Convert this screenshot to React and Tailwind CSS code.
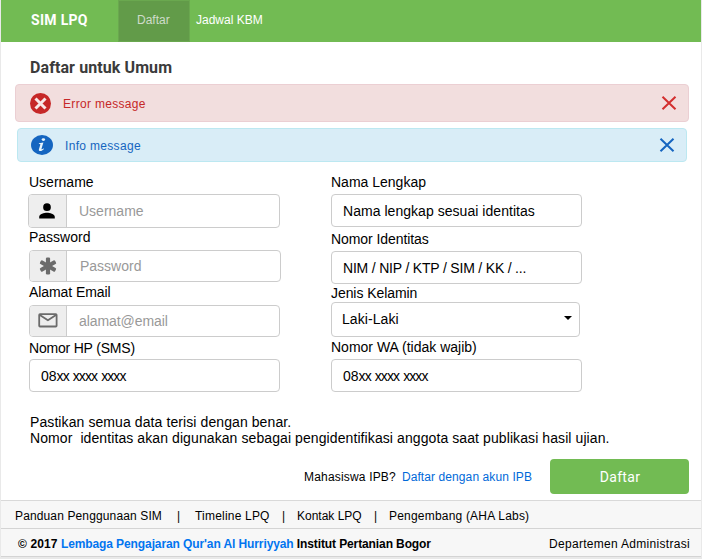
import React from 'react';

const box = 'flex rounded border border-[#cccccc] bg-white overflow-hidden';

function Field({ label, className, labelClass = '', boxClass, icon, iconClass = 'w-[37px]', value, muted, valueClass = '', children }) {
  return (
    <label className={`flex flex-col text-[14px] leading-4 ${className}`}>
      <span className={`h-4 whitespace-pre ${labelClass}`}>{label}</span>
      <span className={`${box} ${boxClass}`}>
        {icon && (
          <span className={`flex h-full shrink-0 items-center justify-center border-r border-[#cccccc] bg-[#eeeeee] ${iconClass}`}>
            {icon}
          </span>
        )}
        <span className={`flex flex-1 items-center whitespace-pre ${muted ? 'text-[#999999]' : 'text-black'} ${valueClass}`}>
          {value}
        </span>
        {children}
      </span>
    </label>
  );
}

function PhoneMask() {
  return (
    <>
      <span>08</span>
      <span className="tracking-[-0.9px] [word-spacing:1px]">xx xxxx xxxx</span>
    </>
  );
}

function UserIcon() {
  return (
    <svg width="22" height="22" viewBox="0 0 24 24" className="mr-0.5">
      <path d="M12 12a4.2 4.2 0 1 0 0-8.4 4.2 4.2 0 0 0 0 8.4zm0 1.8c-2.900 0-8.500 1.500-8.500 4.400V20.200h17v-2c0-2.900-5.600-4.400-8.500-4.400z" fill="#000" />
    </svg>
  );
}

function AsteriskIcon() {
  return (
    <svg width="18" height="18" viewBox="0 0 18 18" className="mr-px">
      <g fill="#6b6b6b">
        <rect x="6.900" y="0.500" width="4.200" height="17" rx="1.200" />
        <rect x="6.900" y="0.300" width="4.200" height="17.400" rx="1.200" transform="rotate(60 9 9)" />
        <rect x="6.900" y="0.300" width="4.200" height="17.400" rx="1.200" transform="rotate(-60 9 9)" />
      </g>
    </svg>
  );
}

function MailIcon() {
  return (
    <svg width="20" height="15" viewBox="0 0 20 15" fill="none" stroke="#6b6b6b" strokeWidth="1.800" strokeLinejoin="round" className="mb-0.5">
      <rect x="1.200" y="1.200" width="17.400" height="12.300" rx="0.800" />
      <path d="M1.800 2l8.100 5.300L18 2" />
    </svg>
  );
}

function CloseIcon({ color }) {
  return (
    <svg width="16" height="16" viewBox="0 0 16 16" stroke={color} strokeWidth="2">
      <path d="M1.500 1.700l13 12.600M14.500 1.700l-13 12.600" />
    </svg>
  );
}

export default function App() {
  return (
    <div className="flex h-[559px] w-[702px] flex-col bg-[#e9e9e9] pl-px pr-px font-['Liberation_Sans',Arial,sans-serif] text-black">
      <header className="flex h-[42px] shrink-0 items-stretch bg-[#72bb53] text-[12px] text-white">
        <div className="w-[117px] pl-[30px] pt-[11px] text-[14px] font-bold leading-[18px] tracking-[0.3px] font-[Roboto,sans-serif]">SIM LPQ</div>
        <div className="w-[72px] border border-[#6aa84f] bg-[#629b49] pl-[18px] pt-[11px] leading-4 text-[#cfdcca]">Daftar</div>
        <div className="pl-1.5 pt-3 leading-4">Jadwal KBM</div>
      </header>

      <main className="flex h-[458px] shrink-0 flex-col bg-white">
        <h1 className="ml-[29px] mt-4 h-5 text-[16px] font-bold leading-5 tracking-[0.09px] text-[#3b3b3b] font-[Roboto,sans-serif]">Daftar untuk Umum</h1>

        <div className="ml-[14px] mt-1.5 flex h-[38px] w-[674px] shrink-0 items-center rounded border border-[#ebcfd3] bg-[#f2dede] pl-3.5 pr-[11px] text-[12px] text-[#c62828]">
          <svg width="22" height="22" viewBox="0 0 22 22">
            <circle cx="10.500" cy="11.500" r="10.500" fill="#c62828" />
            <path d="M5.500 6.500l10 10M15.500 6.500l-10 10" stroke="#f8e8e8" strokeWidth="3" />
          </svg>
          <span className="ml-[11px] flex-1 pt-px tracking-[0.32px]">Error message</span>
          <CloseIcon color="#d32f2f" />
        </div>

        <div className="ml-[16px] mt-1.5 flex h-[34px] w-[670px] shrink-0 items-center rounded border border-[#bce8f1] bg-[#d9edf7] pl-3 pr-[11px] text-[12px] text-[#1565c0]">
          <svg width="24" height="22" viewBox="0 0 24 22">
            <ellipse cx="12" cy="11" rx="11" ry="10" fill="#1565c0" />
            <ellipse cx="13.400" cy="5.600" rx="1.700" ry="1.400" fill="#e8f4fb" />
            <path d="M9 9.300l4.400-0.900-1.900 6.300c-.2.800.4.700 2.300-.5v1c-1.800 1.600-3 2-4 1.800-1.100-.3-1.100-1-.8-2l1.400-4.400c.2-.7-.5-.7-1.600-.5z" fill="#e8f4fb" />
          </svg>
          <span className="ml-[11px] flex-1 pt-px tracking-[0.32px]">Info message</span>
          <CloseIcon color="#1565c0" />
        </div>

        <div className="ml-[27px] mt-3 flex h-[219px] shrink-0">
          <div className="w-[303px] shrink-0">
            <Field label="Username" className="h-[55px]" labelClass="ml-px" boxClass="mt-1 h-[34px] w-[252px]" icon={<UserIcon />} iconClass="w-[38px]" value="Username" muted valueClass="pl-3" />
            <Field label="Password" className="ml-px h-[55px]" boxClass="mt-[5px] h-8 w-[252px]" icon={<AsteriskIcon />} value="Password" muted valueClass="pl-[13px]" />
            <Field label="Alamat Email" className="ml-px h-[56px]" labelClass="tracking-[-0.08px]" boxClass="mt-[5px] h-8 w-[251px]" icon={<MailIcon />} value="alamat@email" muted valueClass="pl-3 tracking-[-0.08px]" />
            <Field label="Nomor HP (SMS)" className="ml-px" labelClass="tracking-[-0.2px]" boxClass="mt-[3px] h-[33px] w-[251px]" value={<PhoneMask />} valueClass="pl-[11px]" />
          </div>
          <div className="shrink-0">
            <Field label="Nama Lengkap" className="h-[57px]" boxClass="mt-1 h-[33px] w-[251px]" value="Nama lengkap sesuai identitas" valueClass="pl-[11px] tracking-[0.04px]" />
            <Field label="Nomor Identitas" className="h-[54px]" labelClass="tracking-[-0.07px]" boxClass="mt-1 h-[33px] w-[251px]" value="NIM / NIP / KTP / SIM / KK / ..." valueClass="pl-[11px] tracking-[-0.19px]" />
            <Field label="Jenis Kelamin" className="h-[54px]" labelClass="tracking-[-0.07px]" boxClass="mt-px h-[35px] w-[249px] items-center" value="Laki-Laki" valueClass="pl-[10px] pb-0.5 tracking-[0.08px]">
              <svg width="8" height="4" viewBox="0 0 8 4" className="mb-[3px] mr-[7px]"><path d="M0 0h8L4 4z" /></svg>
            </Field>
            <Field label="Nomor WA (tidak wajib)" className="" boxClass="mt-1 h-[33px] w-[251px]" value={<PhoneMask />} valueClass="pl-[11px]" />
          </div>
        </div>

        <p className="ml-[29px] mt-[21px] h-8 whitespace-pre text-[14px] leading-4 tracking-[0.09px]">{'Pastikan semua data terisi dengan benar.\nNomor  identitas akan digunakan sebagai pengidentifikasi anggota saat publikasi hasil ujian.'}</p>

        <div className="mt-[13px] flex h-[35px] items-center justify-end pr-3 text-[12px]">
          <span className="tracking-[0.18px]">Mahasiswa IPB?</span>
          <a className="ml-1.5 tracking-[0.09px] text-[#0069d9]">Daftar dengan akun IPB</a>
          <button className="ml-[18px] h-[35px] w-[139px] rounded-sm bg-[#72bb53] pl-px pt-0.5 text-[14px] tracking-[0.3px] text-white font-[Roboto,sans-serif]">Daftar</button>
        </div>
      </main>

      <nav className="flex h-7 shrink-0 whitespace-pre border-t border-[#d9d9d9] bg-[#f7f7f7] pl-[14px] pt-[7px] text-[12px] leading-4">
        <span className="w-[162px] tracking-[0.13px]">Panduan Penggunaan SIM</span>
        <span className="w-[18px]">|</span>
        <span className="w-[87px] tracking-[0.2px]">Timeline LPQ</span>
        <span className="w-[15px]">|</span>
        <span className="w-[77px]">Kontak LPQ</span>
        <span className="w-[15px]">|</span>
        <span className="tracking-[0.2px]">Pengembang (AHA Labs)</span>
      </nav>
      <footer className="flex h-[29px] shrink-0 justify-between border-b border-t border-[#d4d4d4] bg-[#f7f7f7] pl-[17px] pr-[11px] pt-[7px] text-[12px] leading-4">
        <strong><span className="tracking-[0.1px]">© 2017 </span><a className="tracking-[-0.1px] text-[#0275f0]">Lembaga Pengajaran Qur'an Al Hurriyyah</a><span className="tracking-[-0.11px]"> Institut Pertanian Bogor</span></strong>
        <span className="tracking-[0.3px]">Departemen Administrasi</span>
      </footer>
    </div>
  );
}
